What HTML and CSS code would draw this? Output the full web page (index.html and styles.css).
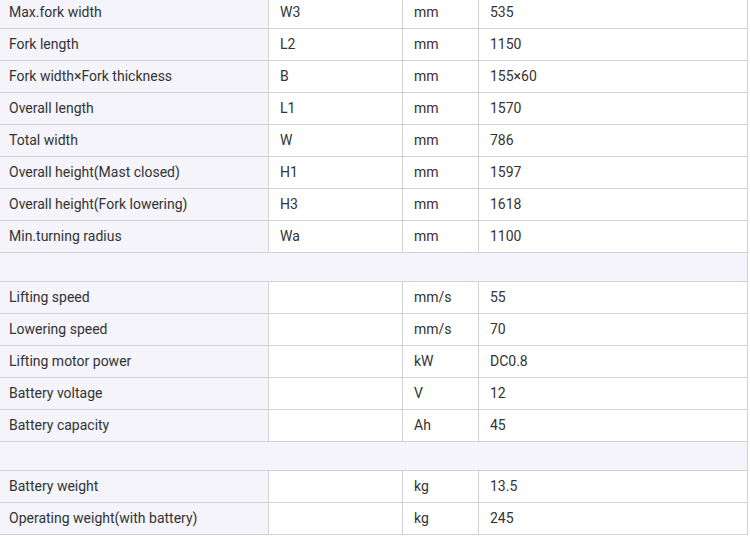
FILE: index.html
```html
<!DOCTYPE html>
<html>
<head>
<meta charset="utf-8">
<link rel="stylesheet" href="styles.css">
</head>
<body>
<table class="spec">
  <colgroup>
    <col class="c1"><col class="c2"><col class="c3"><col class="c4">
  </colgroup>
  <tbody>
    <tr><td class="name">Max.fork width</td><td>W3</td><td>mm</td><td>535</td></tr>
    <tr><td class="name">Fork length</td><td>L2</td><td>mm</td><td>1150</td></tr>
    <tr><td class="name">Fork width×Fork thickness</td><td>B</td><td>mm</td><td>155×60</td></tr>
    <tr><td class="name">Overall length</td><td>L1</td><td>mm</td><td>1570</td></tr>
    <tr><td class="name">Total width</td><td>W</td><td>mm</td><td>786</td></tr>
    <tr><td class="name">Overall height(Mast closed)</td><td>H1</td><td>mm</td><td>1597</td></tr>
    <tr><td class="name">Overall height(Fork lowering)</td><td>H3</td><td>mm</td><td>1618</td></tr>
    <tr><td class="name">Min.turning radius</td><td>Wa</td><td>mm</td><td>1100</td></tr>
    <tr class="gap"><td colspan="4"></td></tr>
    <tr><td class="name">Lifting speed</td><td></td><td>mm/s</td><td>55</td></tr>
    <tr><td class="name">Lowering speed</td><td></td><td>mm/s</td><td>70</td></tr>
    <tr><td class="name">Lifting motor power</td><td></td><td>kW</td><td>DC0.8</td></tr>
    <tr><td class="name">Battery voltage</td><td></td><td>V</td><td>12</td></tr>
    <tr><td class="name">Battery capacity</td><td></td><td>Ah</td><td>45</td></tr>
    <tr class="gap"><td colspan="4"></td></tr>
    <tr><td class="name">Battery weight</td><td></td><td>kg</td><td>13.5</td></tr>
    <tr><td class="name">Operating weight(with battery)</td><td></td><td>kg</td><td>245</td></tr>
  </tbody>
</table>
</body>
</html>
```
FILE: styles.css
```css
html, body {
  margin: 0;
  padding: 0;
  background: #ffffff;
}
.spec {
  border-collapse: collapse;
  table-layout: fixed;
  width: 750px;
  margin: -4px 0 0 -3px;
  font-family: Roboto, "Liberation Sans", sans-serif;
  font-size: 14px;
  color: #333333;
}
.c1 { width: 271px; }
.c2 { width: 134px; }
.c3 { width: 76px; }
.c4 { width: 269px; }
.spec td {
  border: 1px solid #d2d2d6;
  height: 32px;
  padding: 0 0 2px 11px;
  box-sizing: border-box;
  line-height: 16px;
  vertical-align: middle;
  background: #ffffff;
  white-space: nowrap;
}
.spec td.name {
  background: #f4f4fa;
}
.spec tr.gap td {
  height: 29px;
  background: #f4f4fa;
}
```
